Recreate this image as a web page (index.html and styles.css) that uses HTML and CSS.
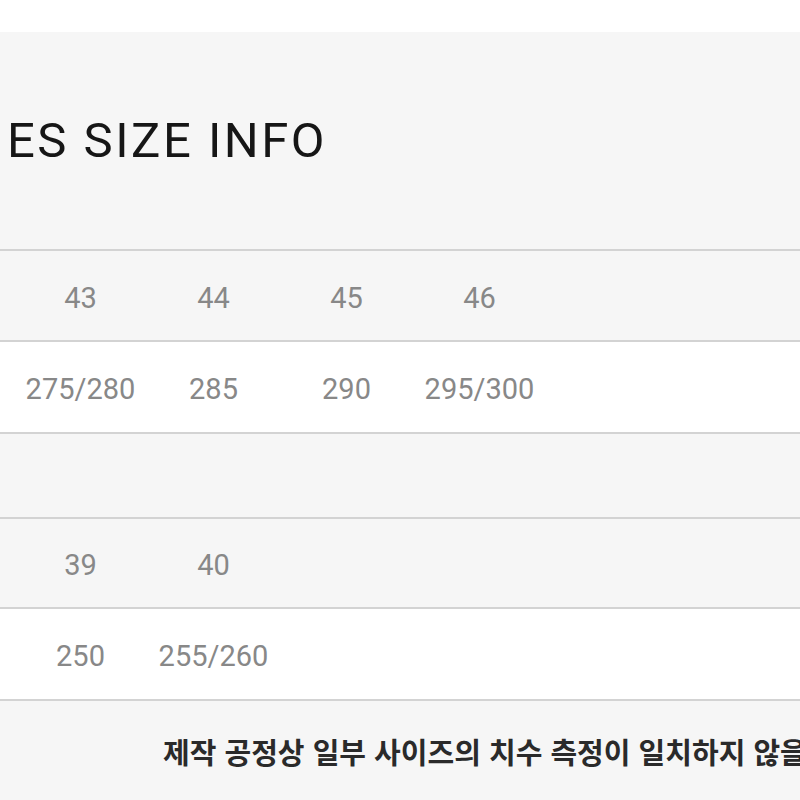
FILE: index.html
```html
<!DOCTYPE html>
<html lang="ko">
<head>
<meta charset="utf-8">
<link rel="stylesheet" href="styles.css">
</head>
<body>
<div class="page">
  <div class="top"></div>
  <div class="sheet">
    <div class="title-wrap"><h1 class="title">ES SIZE INFO</h1></div>
    <div class="table">
      <div class="row head"><span>43</span><span>44</span><span>45</span><span>46</span></div>
      <div class="row body"><span>275/280</span><span>285</span><span>290</span><span>295/300</span></div>
    </div>
    <div class="gap"></div>
    <div class="table">
      <div class="row head short"><span>39</span><span>40</span></div>
      <div class="row body"><span>250</span><span>255/260</span></div>
    </div>
    <div class="note"><p class="note-text">제작 공정상 일부 사이즈의 치수 측정이 일치하지 않을</p></div>
  </div>
</div>
</body>
</html>
```
FILE: styles.css
```css
html, body {
  margin: 0;
  padding: 0;
  overflow: hidden;
}
.page {
  width: 800px;
  height: 800px;
  overflow: hidden;
  font-family: Roboto, "Noto Sans", "Noto Sans CJK KR", sans-serif;
}
.top {
  height: 32px;
  background: #ffffff;
}
.sheet {
  background: #f6f6f6;
  height: 768px;
}
.title-wrap {
  height: 217px;
  display: flex;
  align-items: center;
  padding-left: 7px;
}
.title {
  margin: 0;
  font-weight: 400;
  font-size: 49px;
  letter-spacing: 2.5px;
  color: #161616;
  line-height: 1;
  padding-top: 0;
}
.table {
  border-bottom: 2px solid #d3d3d3;
}
.row {
  display: grid;
  grid-template-columns: repeat(4, 133px);
  padding-left: 14px;
  align-items: center;
  border-top: 2px solid #d3d3d3;
  height: 89px;
  font-size: 29px;
  color: #888888;
}
.row span {
  text-align: center;
  padding-top: 4px;
}
.row.head {
  background: #f6f6f6;
}
.row.body {
  background: #ffffff;
  height: 90px;
}
.row.short {
  height: 88px;
}
.gap {
  height: 83px;
}
.note {
  height: 99px;
  display: flex;
  align-items: center;
  padding-left: 163px;
}
.note-text {
  margin: 0;
  white-space: nowrap;
  font-family: "Noto Sans CJK KR", sans-serif;
  font-weight: 700;
  font-size: 29px;
  color: #2a2a2a;
  letter-spacing: 0;
}
```
